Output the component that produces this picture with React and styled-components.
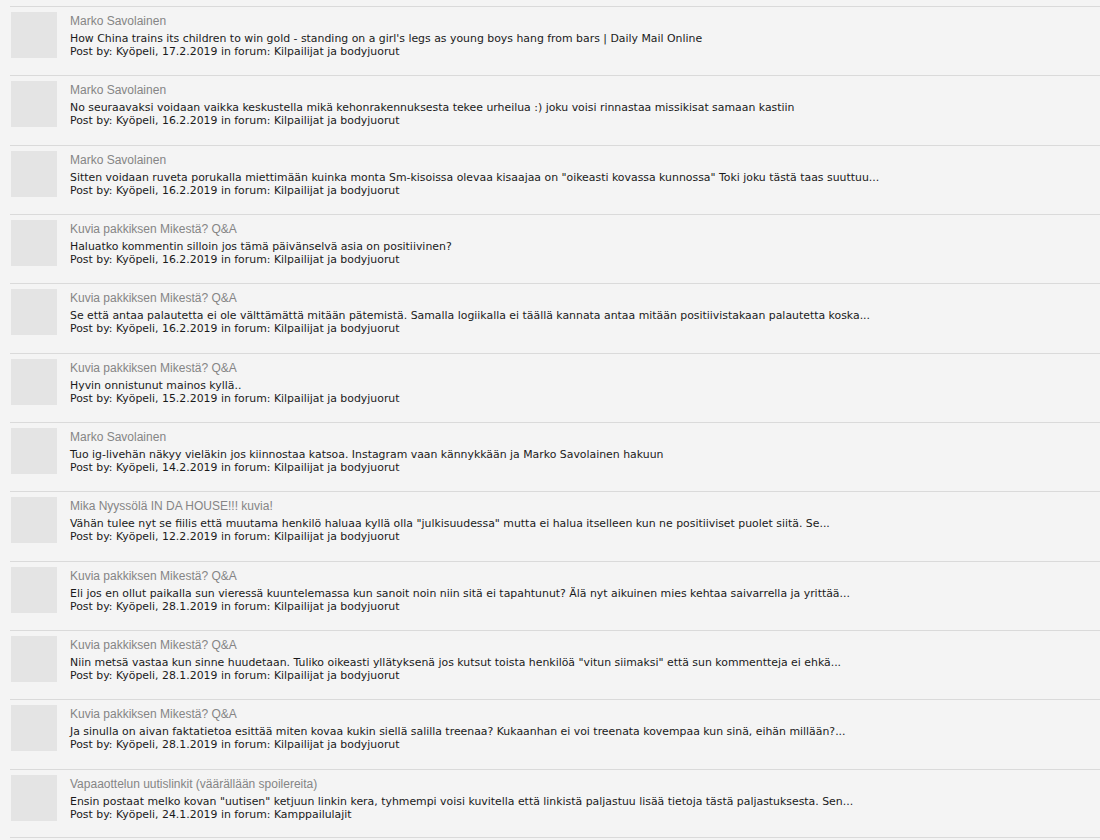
import React from "react";
import styled, { createGlobalStyle } from "styled-components";

const GlobalStyle = createGlobalStyle`
  html, body {
    margin: 0;
    padding: 0;
    background: #f4f4f4;
  }
`;

const posts = [
  { topic: "Marko Savolainen", text: "How China trains its children to win gold - standing on a girl's legs as young boys hang from bars | Daily Mail Online", date: "17.2.2019", forum: "Kilpailijat ja bodyjuorut" },
  { topic: "Marko Savolainen", text: "No seuraavaksi voidaan vaikka keskustella mikä kehonrakennuksesta tekee urheilua :) joku voisi rinnastaa missikisat samaan kastiin", date: "16.2.2019", forum: "Kilpailijat ja bodyjuorut" },
  { topic: "Marko Savolainen", text: "Sitten voidaan ruveta porukalla miettimään kuinka monta Sm-kisoissa olevaa kisaajaa on \"oikeasti kovassa kunnossa\" Toki joku tästä taas suuttuu...", date: "16.2.2019", forum: "Kilpailijat ja bodyjuorut" },
  { topic: "Kuvia pakkiksen Mikestä? Q&A", text: "Haluatko kommentin silloin jos tämä päivänselvä asia on positiivinen?", date: "16.2.2019", forum: "Kilpailijat ja bodyjuorut" },
  { topic: "Kuvia pakkiksen Mikestä? Q&A", text: "Se että antaa palautetta ei ole välttämättä mitään pätemistä. Samalla logiikalla ei täällä kannata antaa mitään positiivistakaan palautetta koska...", date: "16.2.2019", forum: "Kilpailijat ja bodyjuorut" },
  { topic: "Kuvia pakkiksen Mikestä? Q&A", text: "Hyvin onnistunut mainos kyllä..", date: "15.2.2019", forum: "Kilpailijat ja bodyjuorut" },
  { topic: "Marko Savolainen", text: "Tuo ig-livehän näkyy vieläkin jos kiinnostaa katsoa. Instagram vaan kännykkään ja Marko Savolainen hakuun", date: "14.2.2019", forum: "Kilpailijat ja bodyjuorut" },
  { topic: "Mika Nyyssölä IN DA HOUSE!!! kuvia!", text: "Vähän tulee nyt se fiilis että muutama henkilö haluaa kyllä olla \"julkisuudessa\" mutta ei halua itselleen kun ne positiiviset puolet siitä. Se...", date: "12.2.2019", forum: "Kilpailijat ja bodyjuorut" },
  { topic: "Kuvia pakkiksen Mikestä? Q&A", text: "Eli jos en ollut paikalla sun vieressä kuuntelemassa kun sanoit noin niin sitä ei tapahtunut? Älä nyt aikuinen mies kehtaa saivarrella ja yrittää...", date: "28.1.2019", forum: "Kilpailijat ja bodyjuorut" },
  { topic: "Kuvia pakkiksen Mikestä? Q&A", text: "Niin metsä vastaa kun sinne huudetaan. Tuliko oikeasti yllätyksenä jos kutsut toista henkilöä \"vitun siimaksi\" että sun kommentteja ei ehkä...", date: "28.1.2019", forum: "Kilpailijat ja bodyjuorut" },
  { topic: "Kuvia pakkiksen Mikestä? Q&A", text: "Ja sinulla on aivan faktatietoa esittää miten kovaa kukin siellä salilla treenaa? Kukaanhan ei voi treenata kovempaa kun sinä, eihän millään?...", date: "28.1.2019", forum: "Kilpailijat ja bodyjuorut" },
  { topic: "Vapaaottelun uutislinkit (väärällään spoilereita)", text: "Ensin postaat melko kovan \"uutisen\" ketjuun linkin kera, tyhmempi voisi kuvitella että linkistä paljastuu lisää tietoja tästä paljastuksesta. Sen...", date: "24.1.2019", forum: "Kamppailulajit" },
];

const List = styled.div`
  padding: 6px 0 0 10px;
`;

const Row = styled.div`
  display: flex;
  align-items: flex-start;
  box-sizing: border-box;
  height: 69.35px;
  padding: 5px 0 0 1px;
  border-top: 1px solid #dadada;
  &:last-child {
    border-bottom: 1px solid #dadada;
  }
`;

const Thumb = styled.div`
  flex: none;
  width: 46px;
  height: 46px;
  background: #e4e4e4;
`;

const Content = styled.div`
  margin: 2px 0 0 13px;
  min-width: 0;
`;

const Topic = styled.div`
  font-family: "Liberation Sans", Arial, sans-serif;
  font-size: 12px;
  line-height: 14px;
  color: #858585;
  margin-bottom: 4px;
`;

const Text = styled.div`
  font-family: "DejaVu Sans", Verdana, sans-serif;
  font-size: 10.9px;
  line-height: 13px;
  color: #1a1a1a;
  white-space: nowrap;
`;

export default function App() {
  return (
    <>
      <GlobalStyle />
      <List>
        {posts.map((p, i) => (
          <Row key={i}>
            <Thumb />
            <Content>
              <Topic>{p.topic}</Topic>
              <Text>{p.text}</Text>
              <Text>
                Post by: Kyöpeli, {p.date} in forum: {p.forum}
              </Text>
            </Content>
          </Row>
        ))}
      </List>
    </>
  );
}
